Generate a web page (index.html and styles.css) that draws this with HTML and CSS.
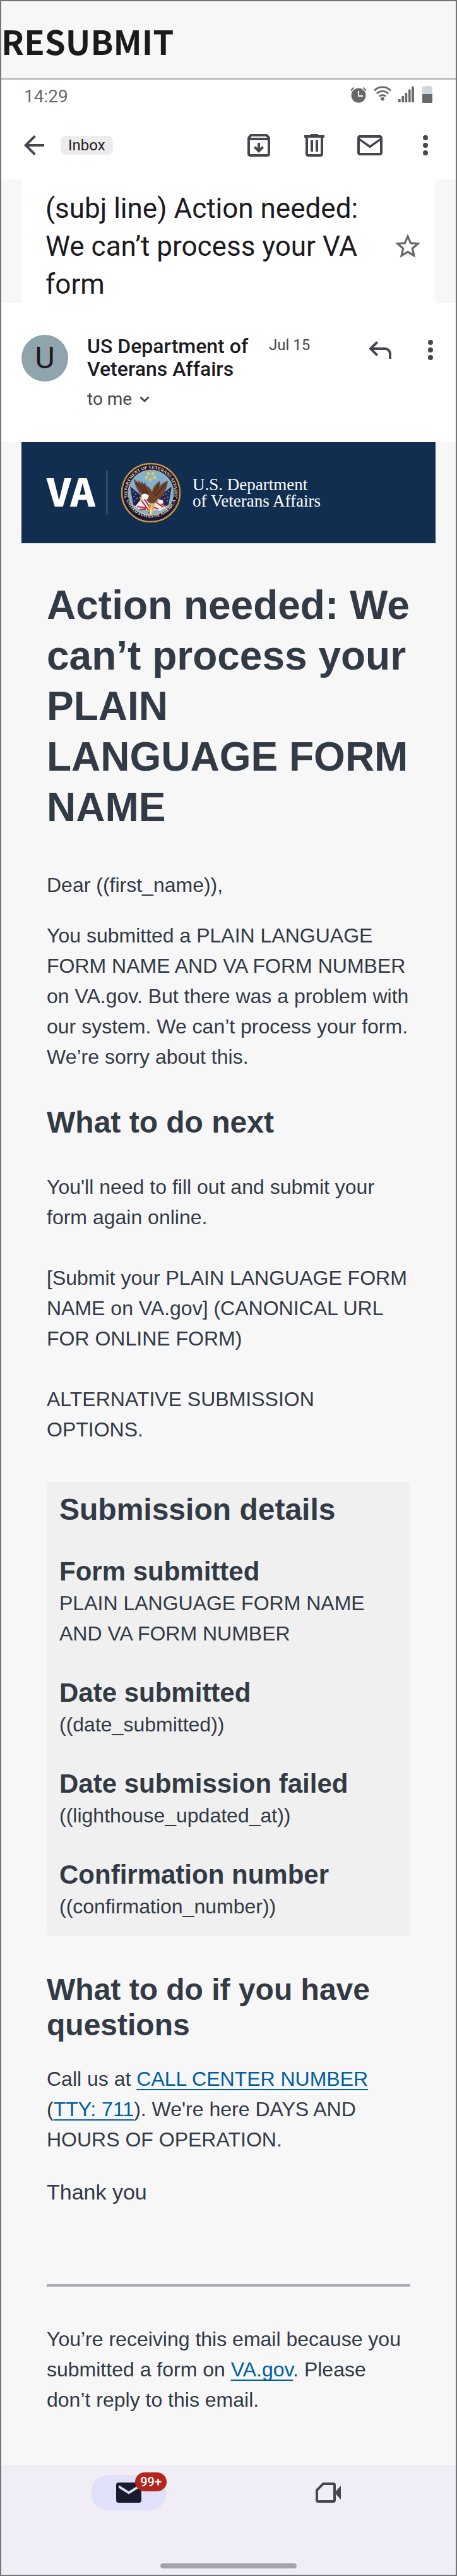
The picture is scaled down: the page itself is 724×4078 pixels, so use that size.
FILE: index.html
```html
<!DOCTYPE html>
<html lang="en">
<head>
<meta charset="utf-8">
<meta name="viewport" content="width=device-width, initial-scale=1">
<title>Resubmit</title>
<link rel="stylesheet" href="styles.css">
</head>
<body>
<div class="screen">
  <header class="board-title"><h1 class="board-name">RESUBMIT</h1></header>

  <div class="status-bar">
    <span class="clock">14:29</span>
    <div class="status-icons">
      <svg class="status-icon" width="28" height="28" viewBox="0 0 28 28" aria-hidden="true">
        <circle cx="14" cy="16" r="11.5" fill="#696969"/>
        <path d="M14 9v8h7" fill="none" stroke="#fff" stroke-width="2"/>
        <path d="M2 8.500l4.500-5M26 8.500l-4.500-5" stroke="#696969" stroke-width="2"/>
      </svg>
      <svg class="status-icon" width="28" height="28" viewBox="0 0 28 28" aria-hidden="true">
        <g fill="none" stroke="#696969" stroke-width="2.800">
          <path d="M1 8.500a18 18 0 0 1 26 0"/><path d="M4.800 13.200a13 13 0 0 1 18.400 0"/><path d="M8.800 17.600a7.600 7.600 0 0 1 10.400 0"/>
        </g>
        <circle cx="14" cy="21.500" r="2.800" fill="#696969"/>
      </svg>
      <svg class="status-icon" width="28" height="28" viewBox="0 0 28 28" aria-hidden="true">
        <path d="M1 22h3.600v5H1zM6.400 17H10v10H6.400zM11.600 12h3.600v15h-3.600zM17 6.500h3.600V27H17zM22 2h4v25h-4z" fill="#696969"/>
      </svg>
      <svg class="battery-icon" width="18" height="28" viewBox="0 0 18 28" aria-hidden="true">
        <path d="M5 1h8v1h3l1 1v11H1V3l1-1h3z" fill="#cfd8dc"/><path d="M1 14h16v13l-1 1H2l-1-1z" fill="#696969"/>
      </svg>
    </div>
  </div>

  <nav class="toolbar" aria-label="Message actions">
    <button class="icon-button" type="button" aria-label="Back">
      <svg width="48" height="48" viewBox="0 0 24 24" fill="#47464f"><path d="M20 11H7.800l5.600-5.600L12 4l-8 8 8 8 1.400-1.400L7.800 13H20z"/></svg>
    </button>
    <button class="chip" type="button">Inbox</button>
    <div class="toolbar-actions">
      <button class="icon-button" type="button" aria-label="Archive">
        <svg width="48" height="48" viewBox="0 0 24 24" fill="#47464f"><path d="M20.540 5.230l-1.390-1.680C18.880 3.210 18.470 3 18 3H6c-.470 0-.880.210-1.160.550L3.460 5.230C3.170 5.570 3 6.020 3 6.500V19c0 1.100.900 2 2 2h14c1.100 0 2-.900 2-2V6.500c0-.480-.170-.930-.460-1.270zM6.240 5h11.520l.830 1H5.420l.820-1zM5 19V8h14v11H5z"/><path d="M13 10h-2v4.200l-1.600-1.600L8 14l4 4 4-4-1.400-1.400-1.600 1.600z"/></svg>
      </button>
      <button class="icon-button" type="button" aria-label="Delete">
        <svg width="48" height="48" viewBox="0 0 24 24" fill="#47464f"><path d="M15 4V3H9v1H4v2h1v13c0 1.100.900 2 2 2h10c1.100 0 2-.900 2-2V6h1V4h-5zm2 15H7V6h10v13zM9 8h2v9H9zm4 0h2v9h-2z"/></svg>
      </button>
      <button class="icon-button" type="button" aria-label="Mark as unread">
        <svg width="48" height="48" viewBox="0 0 24 24" fill="#47464f"><path d="M22 6c0-1.100-.900-2-2-2H4c-1.100 0-2 .900-2 2v12c0 1.100.900 2 2 2h16c1.100 0 2-.900 2-2V6zm-2 0v.500l-8 5.500-8-5.500V6h16zm0 12H4V8.500l8 5.700 8-5.700V18z"/></svg>
      </button>
      <button class="icon-button" type="button" aria-label="More options">
        <svg width="48" height="48" viewBox="0 0 24 24" fill="#47464f"><circle cx="12" cy="6" r="2"/><circle cx="12" cy="12" r="2"/><circle cx="12" cy="18" r="2"/></svg>
      </button>
    </div>
  </nav>

  <div class="subject-row">
    <div class="subject">
      <h2 class="subject-line">(subj line) Action needed: We can’t process your VA form</h2>
      <button class="icon-button star" type="button" aria-label="Star">
        <svg width="48" height="48" viewBox="0 0 24 24" fill="#68676d"><path d="M22 9.240l-7.190-.620L12 2 9.190 8.630 2 9.240l5.460 4.730L5.820 21 12 17.270 18.180 21l-1.630-7.030L22 9.240zM12 15.400l-3.760 2.270 1-4.280-3.320-2.880 4.380-.380L12 6.100l1.710 4.040 4.380.380-3.320 2.880 1 4.280L12 15.400z"/></svg>
      </button>
    </div>
  </div>

  <section class="sender" aria-label="Sender">
    <div class="avatar">U</div>
    <div class="sender-info">
      <div class="sender-head">
        <p class="sender-name">US Department of Veterans Affairs</p>
        <time class="sent-date">Jul 15</time>
      </div>
      <button class="recipient" type="button">to me
        <svg width="16" height="12" viewBox="0 0 16 12" aria-hidden="true"><path d="M1.500 2.500L8 9l6.500-6.500" fill="none" stroke="#47464f" stroke-width="2.800"/></svg>
      </button>
    </div>
    <div class="sender-actions">
      <button class="icon-button" type="button" aria-label="Reply">
        <svg width="48" height="48" viewBox="0 0 24 24" fill="none" stroke="#47464f" stroke-width="2"><path d="M9.300 6.300L4.500 11l4.800 4.700" stroke-linecap="round"/><path d="M4.500 11H16a4 4 0 0 1 4 4v4"/></svg>
      </button>
      <button class="icon-button" type="button" aria-label="More message options">
        <svg width="48" height="48" viewBox="0 0 24 24" fill="#47464f"><circle cx="12" cy="6" r="2"/><circle cx="12" cy="12" r="2"/><circle cx="12" cy="18" r="2"/></svg>
      </button>
    </div>
  </section>

  <article class="email">
    <div class="banner">
      <span class="va-mark">VA</span>
      <svg class="seal" width="96" height="96" viewBox="0 0 96 96" role="img" aria-label="Department seal">
        <defs>
          <path id="ring-top" d="M12 58A37.500 37.500 0 1 1 84 58"/>
          <path id="ring-bottom" d="M7.500 55A41.500 41.500 0 0 0 88.500 55"/>
        </defs>
        <circle cx="48" cy="48" r="47.500" fill="#181542"/>
        <circle cx="48" cy="48" r="46" fill="none" stroke="#d6a43a" stroke-width="2.500"/>
        <circle cx="48" cy="48" r="46" fill="none" stroke="#7b4c26" stroke-width="1" stroke-dasharray="1 2"/>
        <circle cx="48" cy="48" r="36" fill="#7fb2d0" stroke="#c9a85a" stroke-width="1"/>
        <g class="seal-text">
          <text><textPath href="#ring-top" startOffset="50%" text-anchor="middle">DEPARTMENT OF VETERANS AFFAIRS</textPath></text>
          <text><textPath href="#ring-bottom" startOffset="50%" text-anchor="middle">UNITED STATES OF AMERICA</textPath></text>
        </g>
        <circle cx="7" cy="56" r="1" fill="#f3df9a"/><circle cx="89" cy="56" r="1" fill="#f3df9a"/>
        <path d="M14 37l18 37M82 37L64 74" stroke="#d8d3c4" stroke-width="1"/>
        <path d="M15 38l16 13 11 18-8 6-14-8z" fill="#252452"/>
        <path d="M81 38L65 51 54 69l8 6 14-8z" fill="#252452"/>
        <g fill="#e9edf5"><circle cx="20" cy="46" r=".8"/><circle cx="24" cy="50" r=".8"/><circle cx="21" cy="54" r=".8"/><circle cx="26" cy="57" r=".8"/><circle cx="22" cy="61" r=".8"/><circle cx="76" cy="46" r=".8"/><circle cx="72" cy="50" r=".8"/><circle cx="75" cy="55" r=".8"/><circle cx="70" cy="57" r=".8"/><circle cx="74" cy="61" r=".8"/><circle cx="68" cy="52" r=".8"/></g>
        <path d="M31 60l9-5 8 12 9-6 10 5 7 4-11 7-9-2-6 8-6-8-10 1-9-6z" fill="#f0e9e6"/>
        <path d="M33 60l12 17M37 57l10 15M26 70l14 2M30 75l10-1M50 70l10 4M56 63l12 8M62 64l10 6M47 67l-2 14" stroke="#bb2438" stroke-width="2"/>
        <path d="M21 26c2 12 7 23 17 30l7 8 8 1 8-7c8-6 13-18 14-29-6 2-10 5-14 10 2-4 2-8 2-10-7 4-12 10-13 18-1-4-5-8-9-10l-3-6-1 4-4-5-1 4-3-6-1 4z" fill="#71432a"/>
        <path d="M25 33l13 16M29 32l13 18M35 33l9 17M71 35L57 50M67 39L54 54M61 34l-9 16" stroke="#3f2519" stroke-width="1.200"/>
        <path d="M33 53c2-5 9-4 12 0l-3 6-5-1-4 2-1-4z" fill="#f3f3ef"/>
        <path d="M58 58l9 2 1 5-6 1z" fill="#f3f3ef"/><path d="M30 55l4-1v4l-3 1z" fill="#e7b23a"/>
        <path d="M46 66l-1 12M50 66v15M53 65l-1 11" stroke="#e3ae32" stroke-width="2"/>
        <g fill="#f0cf4a"><path id="star" d="M44 14l1 2.500h2.500l-2 1.700.8 2.600-2.300-1.600-2.300 1.600.8-2.600-2-1.700H43z"/><use href="#star" x="7"/><use href="#star" x="-3" y="6"/><use href="#star" x="10" y="6"/><use href="#star" x="3.500" y="10"/></g>
      </svg>
      <p class="agency">U.S. Department<br>of Veterans Affairs</p>
    </div>

    <div class="letter">
      <h1 class="letter-title">Action needed: We can’t process your PLAIN<br>LANGUAGE FORM NAME</h1>
      <div class="intro">
        <p>Dear ((first_name)),</p>
        <p>You submitted a PLAIN LANGUAGE FORM NAME AND VA FORM NUMBER on VA.gov. But there was a problem with our system. We can’t process your form. We’re sorry about this.</p>
      </div>

      <h2 class="section-title">What to do next</h2>
      <div class="steps">
        <p>You'll need to fill out and submit your form again online.</p>
        <p>[Submit your PLAIN LANGUAGE FORM NAME on VA.gov] (CANONICAL URL FOR ONLINE FORM)</p>
        <p>ALTERNATIVE SUBMISSION OPTIONS.</p>
      </div>

      <section class="details">
        <h2 class="section-title">Submission details</h2>
        <div><h3 class="detail-label">Form submitted</h3><p>PLAIN LANGUAGE FORM NAME AND VA FORM NUMBER</p></div>
        <div><h3 class="detail-label">Date submitted</h3><p>((date_submitted))</p></div>
        <div><h3 class="detail-label">Date submission failed</h3><p>((lighthouse_updated_at))</p></div>
        <div><h3 class="detail-label">Confirmation number</h3><p>((confirmation_number))</p></div>
      </section>

      <h2 class="section-title">What to do if you have questions</h2>
      <p class="contact">Call us at <a href="#call">CALL CENTER NUMBER</a> (<a href="#tty">TTY: 711</a>). We're here DAYS AND HOURS OF OPERATION.</p>
      <p class="thanks">Thank you</p>
      <hr class="divider">
      <p class="notice">You’re receiving this email because you submitted a form on <a href="#va">VA.gov</a>. Please don’t reply to this email.</p>
    </div>
  </article>

  <footer class="bottom-bar">
    <nav class="tabs" aria-label="Apps">
      <button class="tab tab-active" type="button" aria-label="Mail, 99+ unread">
        <svg width="48" height="48" viewBox="0 0 24 24"><path d="M20 4H4a2 2 0 0 0-2 2v12a2 2 0 0 0 2 2h16a2 2 0 0 0 2-2V6a2 2 0 0 0-2-2zm0 4.200l-8 5-8-5V6l8 5 8-5z" fill="#191a2c"/></svg>
        <span class="badge">99+</span>
      </button>
      <button class="tab" type="button" aria-label="Meet">
        <svg width="48" height="48" viewBox="0 0 24 24"><path d="M8 5h8a1 1 0 0 1 1 1v12a1 1 0 0 1-1 1H4a1 1 0 0 1-1-1V10z" fill="none" stroke="#47464f" stroke-width="2"/><path d="M22 6.500v11L17 12z" fill="#47464f"/></svg>
      </button>
    </nav>
    <div class="home-indicator"></div>
  </footer>
</div>
</body>
</html>
```
FILE: styles.css
```css
* { box-sizing: border-box; }

body {
  margin: 0;
  background: #f7f7f7;
  color: #323a45;
  font-family: "Liberation Sans", Arial, sans-serif;
  font-size: 32px;
  line-height: 48px;
}

h1, h2, h3, p { margin: 0; }

button {
  padding: 0;
  border: 0;
  background: none;
  color: inherit;
  font: inherit;
}

svg { display: block; flex: none; }

a {
  color: #005ea2;
  text-decoration: underline;
  text-decoration-thickness: 2px;
  text-decoration-skip-ink: none;
  text-underline-offset: 5px;
}

.screen { border: 2px solid #757575; }

.board-title {
  height: 124px;
  padding-top: 22px;
  border-bottom: 2px solid #a9aeb1;
}

.board-name {
  color: #1b1b1b;
  font: 700 53px/80px "Noto Sans CJK JP", sans-serif;
}

.status-bar {
  display: flex;
  justify-content: space-between;
  padding: 9px 36px 7px;
  background: #fff;
  color: #696969;
  font: 28px/36px Roboto, sans-serif;
}

.status-icons {
  display: flex;
  gap: 10px;
}

.toolbar {
  display: flex;
  align-items: center;
  height: 106px;
  padding: 0 24px 2px 28px;
  background: #fff;
}

.chip {
  margin-left: 18px;
  padding: 0 12px;
  border-radius: 8px;
  background: #ededed;
  color: #1f1f1f;
  font: 24px/30px Roboto, sans-serif;
}

.toolbar-actions {
  display: flex;
  gap: 40px;
  margin-left: auto;
}

.subject-row { padding: 0 32px; }

.subject {
  display: flex;
  align-items: center;
  padding: 16px 20px 0 38px;
  background: #fff;
}

.subject-line {
  flex: 1;
  padding-right: 40px;
  color: #1c1b1f;
  font: 400 44px/60px Roboto, sans-serif;
}

.sender {
  display: flex;
  align-items: flex-start;
  padding: 50px 16px 52px 32px;
  background: #fff;
  font-family: Roboto, sans-serif;
}

.avatar {
  flex: none;
  width: 74px;
  border-radius: 50%;
  background: #90a4ae;
  color: #1c1b1f;
  font-size: 48px;
  line-height: 74px;
  text-align: center;
}

.sender-info {
  flex: 1;
  margin-left: 30px;
}

.sender-head {
  display: flex;
  align-items: flex-start;
  gap: 12px;
}

.sender-name {
  flex: 0 0 276px;
  color: #1c1b1f;
  font-size: 32px;
  font-weight: 500;
  line-height: 36px;
}

.sent-date {
  color: #47464f;
  font-size: 24px;
  line-height: 32px;
}

.recipient {
  display: flex;
  align-items: center;
  gap: 12px;
  margin-top: 14px;
  color: #47464f;
  font-size: 28px;
  line-height: 32px;
}

.sender-actions {
  display: flex;
  gap: 32px;
}

.email { padding: 0 32px; }

.banner {
  display: flex;
  align-items: center;
  height: 160px;
  padding-left: 40px;
  background: #112e51;
  color: #fff;
}

.va-mark {
  flex: 0 0 96px;
  padding-bottom: 8px;
  border-right: 1px solid #a0abb9;
  font: 900 60px/62px "Noto Sans CJK JP", sans-serif;
}

.seal { margin-left: 21px; }

.seal-text {
  fill: #f3df9a;
  font: 700 7px "Liberation Serif", serif;
}

.agency {
  margin-left: 18px;
  font: 27px/26px "Liberation Serif", serif;
}

.letter { padding: 58px 40px 79px; }

.letter-title {
  font-size: 64px;
  line-height: 80px;
}

.intro {
  display: grid;
  gap: 32px;
  margin: 59px 0 52px;
}

.section-title {
  font-size: 48px;
  line-height: 56px;
}

.steps {
  display: grid;
  gap: 48px;
  margin: 50px 0 59px;
}

.details {
  display: grid;
  gap: 44px;
  margin-bottom: 58px;
  padding: 16px 20px 22px;
  background: #f0f0f0;
}

.detail-label {
  font-size: 42px;
  line-height: 52px;
}

.contact { margin: 33px 0 35px; }

.thanks { font-size: 34px; }

.divider {
  height: 4px;
  margin: 122px 0 59px;
  border: 0;
  background: #adadb4;
}

.bottom-bar {
  padding: 16px 44px 10px;
  background: #f0edf7;
}

.tabs {
  display: grid;
  grid-template-columns: 1fr 1fr;
  justify-items: center;
}

.tab {
  position: relative;
  display: grid;
  place-items: center;
  width: 120px;
  height: 56px;
  border-radius: 28px;
}

.tab-active { background: #e0e0f9; }

.badge {
  position: absolute;
  top: -4px;
  right: 0;
  padding: 0 8px;
  border-radius: 15px;
  background: #b3261e;
  color: #fff;
  font: 500 20px/30px Roboto, sans-serif;
}

.home-indicator {
  width: 216px;
  height: 8px;
  margin: 84px auto 0;
  border-radius: 4px;
  background: #a5a3aa;
}
```
